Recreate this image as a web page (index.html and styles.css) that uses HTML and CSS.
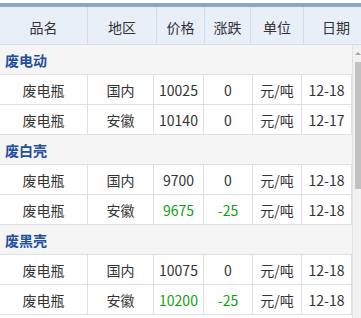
FILE: index.html
```html
<!DOCTYPE html>
<html lang="zh">
<head>
<meta charset="utf-8">
<link rel="stylesheet" href="styles.css">
</head>
<body>
<div class="panel">
  <div class="topbar"></div>
  <div class="head">
    <div class="hc">品名</div>
    <div class="hc">地区</div>
    <div class="hc">价格</div>
    <div class="hc">涨跌</div>
    <div class="hc">单位</div>
    <div class="hc last">日期</div>
  </div>
  <div class="bodywrap">
    <div class="rows">
      <div class="group">废电动</div>
      <div class="c">废电瓶</div><div class="c">国内</div><div class="c">10025</div><div class="c">0</div><div class="c">元/吨</div><div class="c">12-18</div>
      <div class="c">废电瓶</div><div class="c">安徽</div><div class="c">10140</div><div class="c">0</div><div class="c">元/吨</div><div class="c">12-17</div>
      <div class="group">废白壳</div>
      <div class="c">废电瓶</div><div class="c">国内</div><div class="c">9700</div><div class="c">0</div><div class="c">元/吨</div><div class="c">12-18</div>
      <div class="c">废电瓶</div><div class="c">安徽</div><div class="c down">9675</div><div class="c down">-25</div><div class="c">元/吨</div><div class="c">12-18</div>
      <div class="group">废黑壳</div>
      <div class="c">废电瓶</div><div class="c">国内</div><div class="c">10075</div><div class="c">0</div><div class="c">元/吨</div><div class="c">12-18</div>
      <div class="c">废电瓶</div><div class="c">安徽</div><div class="c down">10200</div><div class="c down">-25</div><div class="c">元/吨</div><div class="c">12-18</div>
    </div>
    <div class="scrollbar">
      <div class="arrow"></div>
      <div class="thumb"></div>
    </div>
  </div>
</div>
</body>
</html>
```
FILE: styles.css
```css
* { box-sizing: border-box; }
html, body { margin: 0; padding: 0; background: #fff; }
body {
  font-family: "Noto Sans CJK SC", "Noto Sans", sans-serif;
  font-size: 14px;
  color: #333;
  width: 361px;
  height: 318px;
  overflow: hidden;
}
.panel { padding-top: 3px; }
.topbar { height: 4px; background: #8fa4c9; }
.head {
  display: grid;
  grid-template-columns: 88px 69px 48px 46px 53px 64px;
  height: 38px;
  background: #e8eff8;
  border-bottom: 1px solid #d8dce6;
  overflow: hidden;
  width: 361px;
}
.hc {
  display: flex;
  align-items: center;
  justify-content: center;
  padding-top: 2px;
  border-right: 1px solid #d8dce6;
  line-height: 1;
}
.hc.last { border-right: none; }
.bodywrap {
  display: flex;
  height: 274px;
  background: #f2f2f4;
}
.rows {
  width: 352px;
  display: grid;
  grid-template-columns: 88px 66px 50px 49px 49px 50px;
  grid-auto-rows: 30px;
  align-content: start;
  background: #fff;
  border-bottom: 1px solid #dcdfe6;
}
.group {
  grid-column: 1 / -1;
  background: #f5f5f5;
  border-bottom: 1px solid #dcdfe6;
  color: #1f4f9e;
  font-weight: bold;
  display: flex;
  align-items: center;
  padding-left: 5px;
  line-height: 1;
}
.c {
  display: flex;
  align-items: center;
  justify-content: center;
  border-bottom: 1px solid #dcdfe6;
  border-right: 1px solid #dcdfe6;
  background: #fff;
  line-height: 1;
}
.c.down { color: #0fa00f; }
.scrollbar {
  width: 9px;
  background: #f1f1f1;
  border-left: 1px solid #e2e2e2;
  position: relative;
}
.arrow {
  position: absolute;
  top: 7px;
  left: 2px;
  width: 0;
  height: 0;
  border-left: 3px solid transparent;
  border-right: 3px solid transparent;
  border-bottom: 3px solid #a3a3a3;
}
.thumb {
  position: absolute;
  top: 17px;
  left: 2px;
  right: 0;
  height: 127px;
  background: #c1c1c1;
}
```
